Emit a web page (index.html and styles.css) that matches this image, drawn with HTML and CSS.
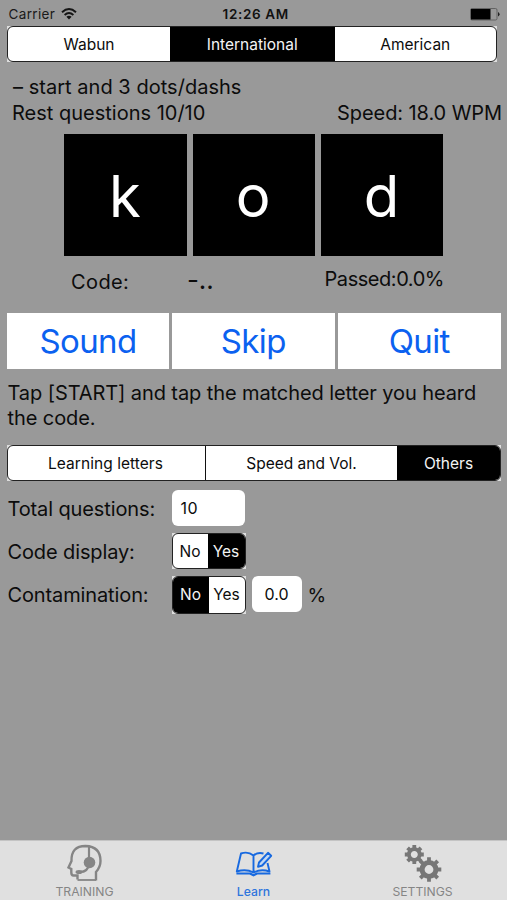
FILE: index.html
```html
<!DOCTYPE html>
<html lang="en">
<head>
<meta charset="utf-8">
<title>Learn</title>
<link rel="stylesheet" href="styles.css">
</head>
<body>
<div class="app">
  <header class="status">
    <div class="carrier"><span>Carrier</span>
      <svg class="wifi" viewBox="0 0 16 12"><g fill="none" stroke="#151515" stroke-width="1.9"><path d="M1 4.3Q8-2.1 15 4.3"/><path d="M3.6 7Q8 3.1 12.4 7"/></g><path d="M5.4 8.7Q8 6.6 10.6 8.7L8 11.4Z" fill="#151515"/></svg>
    </div>
    <div class="time">12:26 AM</div>
    <svg class="battery" viewBox="0 0 30 13"><rect x=".5" y=".5" width="26.5" height="11.5" rx="1.5" fill="#999" stroke="#555" stroke-width=".8"/><path d="M1 1h19.5v10.5H1z" fill="#000"/><path d="M28 4Q29.600 4.800 29.600 6.200T28 8.600z" fill="#222"/></svg>
  </header>
  <div class="segwrap mode"><div class="seg"><span>Wabun</span><span class="on">International</span><span>American</span></div></div>
  <div class="info"><span class="t-start">– start and 3 dots/dashs</span></div>
  <div class="info"><span class="t-rest">Rest questions 10/10</span><span class="t-speed">Speed: 18.0 WPM</span></div>
  <div class="tiles"><div class="tile">k</div><div class="tile">o</div><div class="tile">d</div></div>
  <div class="coderow"><span class="t-code">Code:</span><span class="morse">-..</span><span class="t-passed">Passed:0.0%</span></div>
  <div class="actions"><button>Sound</button><button>Skip</button><button>Quit</button></div>
  <p class="help">Tap [START] and tap the matched letter you heard<br>the code.</p>
  <div class="segwrap panel"><div class="seg"><span>Learning letters</span><span>Speed and Vol.</span><span class="on">Others</span></div></div>
  <div class="form">
    <div class="row"><span class="label">Total questions:</span><span class="field total">10</span></div>
    <div class="row"><span class="label">Code display:</span><div class="segwrap yn"><div class="seg"><span>No</span><span class="on">Yes</span></div></div></div>
    <div class="row"><span class="label">Contamination:</span><div class="segwrap yn tall"><div class="seg"><span class="on">No</span><span>Yes</span></div></div><span class="field pct">0.0</span><span class="unit">%</span></div>
  </div>
  <nav class="tabs">
    <div class="tab"><svg viewBox="0 0 36 38"><path d="M10.500 35.500V31.500H6.500Q4.300 31.500 4.300 28.500V25L1.500 23.500L4.500 17Q4 2 18.500 2Q33.500 2.500 33.500 17Q33.500 23 29 28V36.500" fill="none" stroke="#858585" stroke-width="2.400"/><path d="M10.500 36H29" stroke="#858585" stroke-width="1.800"/><path d="M22 3V17M22 20Q21 28 13 28" fill="none" stroke="#858585" stroke-width="2.200"/><circle cx="22.500" cy="18.500" r="5.800" fill="#858585"/><ellipse cx="12" cy="28" rx="3.500" ry="2" fill="#858585"/></svg><span class="tl">TRAINING</span></div>
    <div class="tab active"><svg viewBox="0 0 36 38"><g fill="none" stroke="#1769e0" stroke-width="1.900" stroke-linejoin="round"><path d="M17.500 11.500Q12 7 5 9.500L.8 27.500Q10 24.500 17.500 28.500Q25 24.500 33.500 27.500L31.500 19M17.500 11.500Q21.500 8 27.500 9.500M17.500 11.500V28"/><path stroke-width="2.200" d="M.4 29.500H14L17.500 31.300L21 29.500H34.400"/><path d="M23 18.500L32 8.800L35.200 11.800L26.200 21.500L22 22.800Z" fill="#c4d9f3"/></g></svg><span class="tl">Learn</span></div>
    <div class="tab"><svg class="gears" viewBox="0 0 38 38"><g fill="none" stroke="#777"><g transform="translate(10.300 10.500)"><circle r="5.400" stroke-width="3.800"/><path stroke-width="3.800" d="M0-6.500V-9.500M0 6.500V9.500M6.500 0H9.500M-6.500 0H-9.500M4.600-4.600L6.700-6.700M-4.600 4.600L-6.700 6.700M4.600 4.600L6.700 6.700M-4.600-4.600L-6.700-6.700"/></g><g transform="translate(25 25.500)"><circle r="6.900" stroke-width="5"/><path stroke-width="3.800" d="M0-8V-12.300M0 8V12.300M8 0H12.300M-8 0H-12.300M5.700-5.700L8.700-8.700M-5.700 5.700L-8.700 8.700M5.700 5.700L8.700 8.700M-5.700-5.700L-8.700-8.700"/></g></g></svg><span class="tl">SETTINGS</span></div>
  </nav>
</div>
</body>
</html>
```
FILE: styles.css
```css
* { box-sizing: border-box; }
body { margin: 0; font-family: Inter, "Liberation Sans", sans-serif; color: #0c0c0c; }
.app { width: 507px; height: 900px; background: #999; display: flex; flex-direction: column; overflow: hidden; white-space: nowrap; }
.status { height: 26px; display: grid; grid-template-columns: 1fr auto 1fr; align-items: center; padding: 2px 7px 0 8.500px; font-size: 13.5px; color: #1a1a1a; }
.carrier { display: flex; align-items: center; gap: 6px; letter-spacing: .35px; }
.wifi { width: 16px; height: 12px; }
.time { font-weight: 600; color: #111; letter-spacing: .65px; padding-left: 3px; }
.battery { width: 30px; height: 13px; justify-self: end; }
.segwrap { background: #ddd; flex: none; }
.seg { height: 100%; display: grid; border: 1px solid #222; border-radius: 6px; overflow: hidden; background: #fff; font-size: 15.5px; }
.seg span { display: flex; align-items: center; justify-content: center; }
.seg .on { background: #000; color: #f4f4f4; }
.mode { width: 490px; height: 36px; margin-left: 7px; }
.mode .seg { grid-template-columns: 162px 164.500px 1fr; }
.info { height: 26px; padding: 0 5px 0 12px; display: flex; justify-content: space-between; align-items: center; font-size: 20px; flex: none; }
.mode + .info { margin-top: 12px; }
.t-start { padding-left: 1px; letter-spacing: .03px; }
.t-speed { letter-spacing: -.08px; }
.tiles { display: flex; gap: 6px; margin: 8px 0 0 64.300px; }
.tile { width: 122.300px; height: 122.300px; padding: 2px 1px 0 0; background: #000; color: #fff; font-size: 58px; display: flex; align-items: center; justify-content: center; }
.coderow { height: 57px; display: grid; grid-template-columns: 116px 1fr auto; padding: 11px 63px 0 71px; font-size: 20px; line-height: 24px; }
.t-code, .morse { padding-top: 3px; }
.t-code { letter-spacing: .4px; }
.morse { font-size: 26px; letter-spacing: -.1px; line-height: 20px; }
.t-passed { letter-spacing: -.45px; }
.actions { display: grid; grid-template-columns: 162px 162.500px 163.500px; gap: 3px; margin-left: 7px; width: 494px; height: 56px; flex: none; }
.actions button { border: 0; padding: 0; background: #fff; color: #0b61f0; font: 33px Inter, "Liberation Sans", sans-serif; letter-spacing: -.6px; }
.help { margin: 12px 0 0 7.500px; font-size: 20px; line-height: 24.500px; height: 64px; letter-spacing: -.09px; }
.panel { width: 494px; height: 36px; margin-left: 7px; }
.panel .seg { grid-template-columns: 197px 192px 1fr; }
.panel .seg span:first-child { padding-right: 2px; letter-spacing: .05px; }
.panel .seg span + span:not(.on) { border-left: 1.500px solid #111; }
.form { padding: 9px 0 0 7.500px; display: grid; grid-template-rows: 36px 36px 38px; row-gap: 6.800px; font-size: 20px; }
.row { display: flex; align-items: center; }
.label { width: 164px; padding-top: 1px; letter-spacing: -.12px; }
.field { height: 36px; background: #fff; border-radius: 6px; font-size: 16px; display: flex; align-items: center; }
.total { width: 73px; padding-left: 9px; letter-spacing: .5px; }
.yn { width: 74px; height: 36px; }
.yn.tall { height: 38px; }
.yn .seg { grid-template-columns: 35px 1fr; }
.yn.tall .seg { grid-template-columns: 36px 1fr; }
.pct { width: 50px; margin: 0 6px; justify-content: center; align-self: flex-start; }
.unit { padding-top: 1px; font-size: 19px; }
.tabs { height: 60px; margin-top: auto; background: #e0e0e0; border-top: 1px solid #c4c4c4; display: grid; grid-template-columns: repeat(3, 1fr); color: #858585; font-size: 12.200px; flex: none; }
.tab { display: flex; flex-direction: column; align-items: center; padding-top: 3px; }
.tab svg { width: 36px; height: 38px; overflow: visible; }
.tab .tl { line-height: 15px; margin-top: 2px; }
.tab .gears { width: 38px; }
.tab.active { color: #2e75dd; font-weight: 500; }
```
